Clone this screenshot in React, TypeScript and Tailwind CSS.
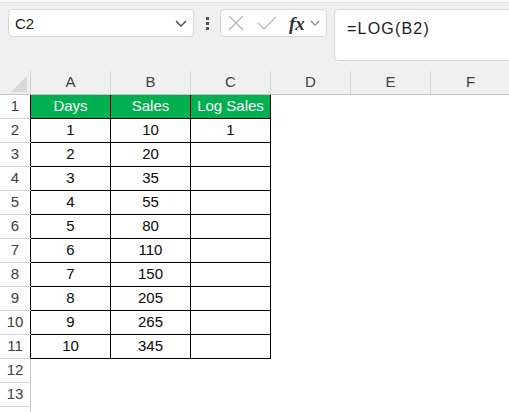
import React from "react";

const cols = ["A", "B", "C", "D", "E", "F"];
const data: [string, string, string][] = [
  ["1", "10", "1"],
  ["2", "20", ""],
  ["3", "35", ""],
  ["4", "55", ""],
  ["5", "80", ""],
  ["6", "110", ""],
  ["7", "150", ""],
  ["8", "205", ""],
  ["9", "265", ""],
  ["10", "345", ""],
];

function Chevron({ className }: { className?: string }) {
  return (
    <svg className={className} viewBox="0 0 12 7" fill="none" stroke="currentColor" strokeWidth="1.3">
      <path d="M1 1l5 5 5-5" />
    </svg>
  );
}

function RowHead({ n, inTable }: { n: number | null; inTable: boolean }) {
  return (
    <div
      className={
        "w-[31px] shrink-0 h-full flex items-center justify-center border-b border-b-[#d4d4d4] border-r text-[15px] text-[#404040] " +
        (inTable ? "border-r-black" : "border-r-[#c8c8c8]")
      }
    >
      {n}
    </div>
  );
}

export default function App() {
  return (
    <div
      className="w-[509px] h-[412px] overflow-hidden bg-[#f0f0f0] text-[#111]"
      style={{ fontFamily: '"Liberation Sans", Arial, sans-serif' }}
    >
      <div className="h-[3px] bg-[#f8f8f8] border-b border-[#e2e2e2]" />
      {/* toolbar */}
      <div className="flex items-start pt-[6px] pl-[8px] h-[68px]">
        <div className="w-[186px] h-[28px] bg-white rounded-[4px] border border-[#d6d6d6] flex items-center pl-[6px] pr-[6px]">
          <span className="text-[15px] text-[#1a1a1a] flex-1 pt-[2px]">C2</span>
          <Chevron className="w-[12px] h-[7px] text-[#444]" />
        </div>
        <div className="w-[26px] h-[28px] flex flex-col items-center justify-center gap-[2px]">
          <div className="w-[3px] h-[3px] bg-[#555]" />
          <div className="w-[3px] h-[3px] bg-[#555]" />
          <div className="w-[3px] h-[3px] bg-[#555]" />
        </div>
        <div className="w-[107px] h-[28px] bg-white rounded-[4px] border border-[#d6d6d6] flex items-center pl-[7px]">
          <svg className="w-[16px] h-[16px] text-[#b4b4b4]" viewBox="0 0 16 16" fill="none" stroke="currentColor" strokeWidth="1.2">
            <path d="M1 1l14 14M15 1L1 15" />
          </svg>
          <svg className="w-[20px] h-[14px] ml-[13px] text-[#b4b4b4]" viewBox="0 0 20 14" fill="none" stroke="currentColor" strokeWidth="1.2">
            <path d="M1 7l6 6L19 1" />
          </svg>
          <span
            className="ml-[12px] text-[19px] italic font-bold text-[#333] leading-none"
            style={{ fontFamily: '"Liberation Serif", "Times New Roman", serif' }}
          >
            fx
          </span>
          <Chevron className="ml-[5px] w-[10px] h-[6px] text-[#777]" />
        </div>
        <div className="ml-[7px] flex-1 h-[52px] bg-white rounded-l-[5px] border border-r-0 border-[#d6d6d6] pl-[12px] pt-[7px]">
          <span className="text-[16px] tracking-[1.2px] text-[#1a1a1a]">=LOG(B2)</span>
        </div>
      </div>
      {/* column header row */}
      <div className="flex h-[24px] border-b border-[#c6c6c6]">
        <div className="w-[31px] shrink-0 h-full border-r border-[#d0d0d0] flex items-end justify-end pr-[3px] pb-[2px]">
          <svg className="w-[16px] h-[16px]" viewBox="0 0 16 16">
            <path d="M16 0L16 16L0 16Z" fill="#d9d9d9" />
          </svg>
        </div>
        {cols.map((c) => (
          <div
            key={c}
            className="w-[80px] shrink-0 h-full border-r border-[#d6d6d6] flex items-center justify-center text-[15px] text-[#404040]"
          >
            {c}
          </div>
        ))}
      </div>
      {/* row 1 */}
      <div className="flex h-[24px] bg-white">
        <RowHead n={1} inTable />
        {["Days", "Sales", "Log Sales"].map((t) => (
          <div
            key={t}
            className="w-[80px] shrink-0 h-full bg-[#00b050] text-white border-r border-b border-black flex items-center justify-center text-[15px]"
          >
            {t}
          </div>
        ))}
        <div className="flex-1 h-full" />
      </div>
      {data.map((r, i) => (
        <div key={i} className="flex h-[24px] bg-white">
          <RowHead n={i + 2} inTable />
          {r.map((t, j) => (
            <div
              key={j}
              className="w-[80px] shrink-0 h-full border-r border-b border-black flex items-center justify-center text-[15px] text-[#0a0a0a]"
            >
              {t}
            </div>
          ))}
          <div className="flex-1 h-full" />
        </div>
      ))}
      {[12, 13].map((n) => (
        <div key={n} className="flex h-[24px] bg-white">
          <RowHead n={n} inTable={false} />
          <div className="flex-1 h-full" />
        </div>
      ))}
      <div className="flex h-[24px] bg-white">
        <RowHead n={null} inTable={false} />
        <div className="flex-1 h-full" />
      </div>
    </div>
  );
}
